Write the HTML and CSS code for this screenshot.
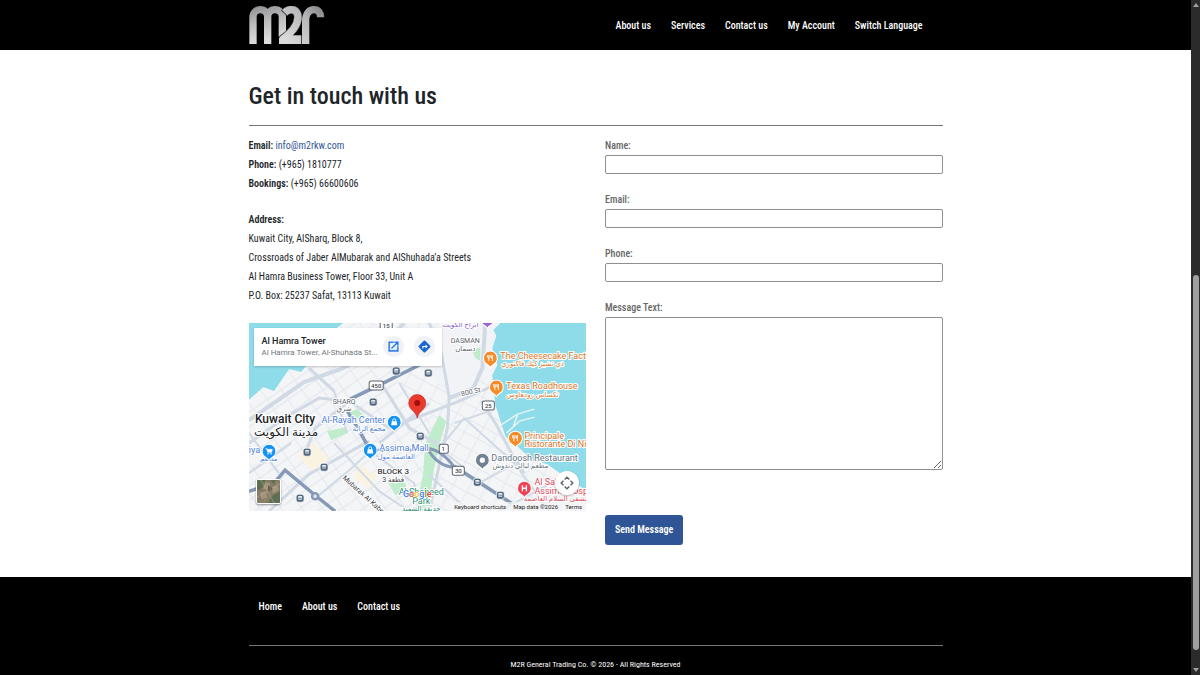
FILE: index.html
```html
<!DOCTYPE html>
<html lang="en">
<head>
<meta charset="utf-8">
<meta name="viewport" content="width=device-width, initial-scale=1">
<title>Contact us - M2R</title>
<link rel="stylesheet" href="styles.css">
</head>
<body>
<header class="site-header">
  <div class="container header-row">
    <a class="logo" href="#" aria-label="M2R home">
      <svg viewBox="0 0 226 114" aria-hidden="true">
        <defs>
          <linearGradient id="steel" gradientUnits="userSpaceOnUse" x1="0" y1="0" x2="30" y2="114">
            <stop offset="0" stop-color="#8d8d8f"/><stop offset=".5" stop-color="#bdbdbf"/><stop offset="1" stop-color="#dededf"/>
          </linearGradient>
          <linearGradient id="steel2" gradientUnits="userSpaceOnUse" x1="225" y1="10" x2="120" y2="114">
            <stop offset="0" stop-color="#858587"/><stop offset=".4" stop-color="#b9b9bb"/><stop offset="1" stop-color="#dadadb"/>
          </linearGradient>
        </defs>
        <g fill="none" stroke-width="22">
          <path stroke="url(#steel)" d="M11 114V33A22 22 0 0 1 55 33V114M55 33A22 22 0 0 1 99 33V92"/>
          <path stroke="#444" stroke-width="25" d="M104 22Q114 11 126 11C138 11 146 20 146 34C146 62 122 84 96 101"/>
          <path stroke="url(#steel2)" d="M169 114V45C169 22 180 11 194 11C207 11 214 20 214 34"/>
          <path stroke="url(#steel2)" d="M106 20Q115 11 126 11C138 11 146 20 146 34C146 62 122 84 98 102"/>
        </g>
        <path fill="url(#steel2)" d="M89 114V95L112 88H156V114Z"/>
      </svg>
    </a>
    <nav class="main-nav" aria-label="Main">
      <a href="#">About us</a>
      <a href="#">Services</a>
      <a href="#">Contact us</a>
      <a href="#">My Account</a>
      <a href="#">Switch Language</a>
    </nav>
  </div>
</header>

<main class="container">
  <h1>Get in touch with us</h1>
  <div class="columns">
    <section class="details">
      <p class="lines"><b>Email:</b> <a href="#">info@m2rkw.com</a><br><b>Phone:</b> (+965) 1810777<br><b>Bookings:</b> (+965) 66600606</p>
      <p class="address"><b>Address:</b><br>Kuwait City, AlSharq, Block 8,<br>Crossroads of Jaber AlMubarak and AlShuhada’a Streets<br>Al Hamra Business Tower, Floor 33, Unit A<br>P.O. Box: 25237 Safat, 13113 Kuwait</p>
      <div class="map">
        <svg class="map-canvas" viewBox="0 0 337 188" role="img" aria-label="Map of Kuwait City">
          <defs>
            <pattern id="streets" width="17" height="12" patternUnits="userSpaceOnUse" patternTransform="rotate(-35)">
              <path d="M0 1H17M5 0V12" fill="none" stroke="#e3e7ed" stroke-width="1"/>
            </pattern>
            <pattern id="streets2" width="13" height="15" patternUnits="userSpaceOnUse" patternTransform="rotate(-62)">
              <path d="M0 1H13M5 0V15" fill="none" stroke="#e3e7ed" stroke-width="1"/>
            </pattern>
            <g id="stop">
              <rect x="-4" y="-4" width="8" height="8" rx="2.5" fill="#50677d" stroke="#fff" stroke-width=".8"/>
              <rect x="-2" y="-2.2" width="4" height="3.6" rx=".6" fill="#e8eef3"/>
              <path d="M-2 0H2M-1.5 2.4H1.5" stroke="#50677d" stroke-width=".8"/>
            </g>
            <path id="pin" d="M0 9.500C-1 7.500-2 7-3.500 6.100A7 7 0 1 1 3.500 6.100C2 7 1 7.500 0 9.500Z" stroke="#fff" stroke-width="1"/>
            <g id="food" stroke="#fff" fill="none" stroke-width=".9">
              <path d="M-1.5-3V3M-2.8-3V-1Q-2.8 0-1.5 0T-.2-1V-3M2 3V-3Q.8-2 .9 0H2"/>
            </g>
            <g id="bag">
              <path d="M-2.5-1H2.5L3 3.2H-3Z" fill="#fff"/>
              <path d="M-1.4-.6V-2A1.4 1.4 0 0 1 1.4-2V-.6" fill="none" stroke="#fff" stroke-width=".9"/>
            </g>
          </defs>
          <rect width="337" height="188" fill="#f4f5f7"/>
          <rect width="337" height="188" fill="url(#streets)"/>
          <path d="M120 0H260V100H190L150 60ZM180 100H337V188H175Z" fill="#f4f5f7"/>
          <path d="M120 0H260V100H190L150 60ZM180 100H337V188H175Z" fill="url(#streets2)"/>
          <path d="M130 22L200 0H250V50L200 72L178 50Z" fill="#f2f3f6"/>
          <g fill="#faf3e2"><path d="M48 132L62 118L80 135L66 150Z"/><path d="M108 22L128 15L140 30L120 36Z"/><path d="M110 142L128 152L120 165L104 155Z"/></g>
          <g fill="#bfeccb">
            <path d="M190 92L197 98L189 125L184 150L179 188H166L174 150L176 120Z"/>
            <path d="M78 108L96 104L98 110L82 117Z"/>
            <path d="M100 89L108 86L117 94L111 97Z"/>
            <path d="M140 160L155 158L158 166L146 172Z"/>
            <path d="M223 28L231 24V38L226 35Z"/>
          </g>
          <g fill="#8edbe9">
            <path d="M0 0H94L66 22L78 43H57L52 49L40 46L25 68L14 64L0 77Z"/>
            <path d="M251 0H337V167L316 154L298 141L283 137L268 123L256 113L250 94L246 82L243 52L248 42L243 25L247 13L244 7Z"/>
          </g>
          <g fill="none" stroke="#e7f5f6" stroke-width="1.5">
            <path d="M250 103L268 91L285 86M257 110L270 98L285 94M268 92L264 103"/>
          </g>
          <g fill="none" stroke="#d0d9e4">
            <path stroke-width="4" d="M0 97L55 59L94 45L130 25L155 0M200 75L224 65L233 45L236 0"/>
            <path stroke-width="3" d="M0 120L40 92L70 75L100 78L140 105L210 78L245 62M20 188L60 151L120 118M60 45L85 68M200 75L192 30L180 0M200 75L198 105L180 188M130 120L180 80M132 60L160 105L196 125M56 130L66 105L98 80M232 78L246 100L262 130L275 150"/>
            <path stroke-width="2" d="M85 120L130 168L160 188M121 128L100 147L66 175M121 128L165 160L170 188M215 95L190 125L215 145M215 95L265 140L300 188M180 152L220 188M0 150L42 120M150 60L180 110M205 100L240 88M230 160L262 142M250 188L320 150M85 68L98 110M0 110L30 150"/>
          </g>
          <g fill="none" stroke="#869ab7">
            <path stroke-width="3.5" d="M101 76L130 62L180 37M97 86L108 104L121 127M0 168L25 160L36 147L66 172L86 188M205 143L228 158L262 180"/>
            <path stroke-width="3" d="M121 127H176M178 125Q193 127 205 144Q188 143 178 125"/>
          </g>
          <circle cx="66" cy="173" r="3" fill="#e9edf3" stroke="#869ab7" stroke-width="2.5"/>
          <use href="#stop" x="147" y="48"/><use href="#stop" x="179" y="50"/><use href="#stop" x="124" y="79"/><use href="#stop" x="171" y="113"/><use href="#stop" x="58" y="129"/><use href="#stop" x="75" y="144"/><use href="#stop" x="51" y="175"/><use href="#stop" x="228" y="159"/><use href="#stop" x="251" y="172"/>
          <g class="shield">
            <rect x="131" y="-2" width="12" height="9" rx="2"/><rect x="120" y="58" width="14" height="9" rx="2"/><rect x="233" y="78" width="12" height="9" rx="2"/><rect x="190" y="121" width="9" height="9" rx="2"/><rect x="203" y="143" width="12" height="9" rx="2"/>
            <text x="137" y="5">15</text><text x="127" y="65">450</text><text x="239" y="85">25</text><text x="194" y="128">1</text><text x="209" y="150">30</text>
          </g>
          <g class="area">
            <text x="95" y="81">SHARQ</text><text x="95" y="88">شرق</text>
            <text x="216" y="20">DASMAN</text><text x="216" y="28">دسمان</text>
            <text class="dark block" x="144" y="151">BLOCK 3</text><text class="dark" x="144" y="159">قطعة 3</text>
            <text transform="translate(222 71) rotate(-12)">800 St</text>
            <text transform="translate(115 175) rotate(42)" class="dark">Mubarak Al Kabeer</text>
          </g>
          <text class="city" x="36" y="100">Kuwait City</text>
          <text class="city city-ar" x="37" y="113">مدينة الكويت</text>
          <g class="poi shop">
            <text class="end" x="136" y="100">Al-Rayah Center</text><text class="small mid" x="120" y="108">مجمع الراية</text>
            <text x="130" y="128">Assima Mall</text><text class="small mid" x="147" y="136">العاصمة مول</text>
            <text class="end" x="11" y="130">iya</text><text class="small end" x="11" y="138">مطعم</text>
          </g>
          <g class="poi food">
            <text x="251" y="36">The Cheesecake Factory</text><text class="small mid" x="283" y="43">ذي تشيز كيك فاكتوري</text>
            <text x="257" y="66">Texas Roadhouse</text><text class="small mid" x="283" y="74">تكساس رودهاوس</text>
            <text x="275" y="116">Principale</text><text x="275" y="124">Ristorante Di Nino</text>
          </g>
          <g class="poi sight"><text class="mid small" x="211" y="4">أبراج الكويت</text></g>
          <g class="poi plain"><text x="242" y="138">Dandoosh Restaurant</text><text class="small mid" x="271" y="145">مطعم ليالي دندوش</text></g>
          <g class="poi health"><text x="285" y="162">Al Salam</text><text x="285" y="171">Assima Hospital</text><text class="small mid" x="311" y="178">مستشفى السلام العاصمة</text></g>
          <g class="poi park"><text class="mid" x="172" y="172">Al Shaheed</text><text class="mid" x="172" y="181">Park</text><text class="mid small" x="172" y="188">حديقة الشهيد</text></g>
          <text class="google" x="168" y="174"><tspan fill="#4285f4">G</tspan><tspan fill="#ea4335">o</tspan><tspan fill="#fbbc05">o</tspan><tspan fill="#4285f4">g</tspan><tspan fill="#34a853">l</tspan><tspan fill="#ea4335">e</tspan></text>
          <g transform="translate(145 99)"><use href="#pin" fill="#1593f5"/><use href="#bag"/></g>
          <g transform="translate(121 127)"><use href="#pin" fill="#1593f5"/><use href="#bag"/></g>
          <g transform="translate(20 128)"><use href="#pin" fill="#1593f5"/><path d="M-3.5-2.5H-2.2L-1.2 1H2.5L3.2-1.8H-2" fill="#fff" stroke="#fff" stroke-width=".8"/><circle cx="-1" cy="2.6" r=".8" fill="#fff"/><circle cx="2" cy="2.6" r=".8" fill="#fff"/></g>
          <g transform="translate(241 35)"><use href="#pin" fill="#f68b28"/><use href="#food"/></g>
          <g transform="translate(247 64)"><use href="#pin" fill="#f68b28"/><use href="#food"/></g>
          <g transform="translate(266 115)"><use href="#pin" fill="#f68b28"/><use href="#food"/></g>
          <g transform="translate(238 -4)"><use href="#pin" fill="#9a67d2"/></g>
          <g transform="translate(233 137)"><use href="#pin" fill="#6f8393"/><circle r="2.6" fill="#fff"/></g>
          <g transform="translate(275 165)"><use href="#pin" fill="#ec4456"/><path d="M-2-3V3M2-3V3M-2 0H2" stroke="#fff" stroke-width="1.3"/></g>
          <path d="M168 95C167 88 159.500 87 159.500 80A8.500 8.500 0 0 1 176.500 80C176.500 87 169 88 168 95Z" fill="#ea3a2e" stroke="#c5221f" stroke-width=".6"/>
          <circle cx="168" cy="80" r="3" fill="#a50e0e"/>
        </svg>
        <div class="place">
          <div class="place-text"><strong>Al Hamra Tower</strong><span>Al Hamra Tower, Al-Shuhada St...</span></div>
          <a class="round" href="#" aria-label="Open in Maps"><svg viewBox="0 0 24 24"><path d="M19 19H5V5h7V3H3v18h18v-9h-2zM14 3v2h3.600l-9.800 9.800 1.400 1.400L19 6.400V10h2V3z" fill="#1a73e8" stroke="#1a73e8" stroke-width=".6"/></svg></a>
          <a class="round" href="#" aria-label="Directions"><svg viewBox="0 0 24 24"><path d="M22.400 10.600L13.400 1.600a2 2 0 0 0-2.800 0l-9 9a2 2 0 0 0 0 2.800l9 9a2 2 0 0 0 2.800 0l9-9a2 2 0 0 0 0-2.800z" fill="#1967d2"/><path d="M8 15.500V11h6V8.500l4 3.500-4 3.500V13h-4v2.500z" fill="#fff"/></svg></a>
        </div>
        <button class="satellite" type="button" aria-label="Show satellite imagery">
          <svg viewBox="0 0 24 24" aria-hidden="true"><rect width="24" height="24" fill="#877d66"/><path d="M0 0H9L6 8L0 11ZM15 17L24 12V24H12ZM14 0H20L18 5Z" fill="#5d6f50"/><path d="M9 2L14 4L11 10L6 9ZM15 8L21 5L23 10L17 14ZM3 13L9 12L11 18L5 20Z" fill="#a5957e"/><path d="M0 18L24 4M4 0L18 24M10 13L14 12M7 22L10 20M19 2L22 4" stroke="#b5a890" stroke-width=".7" fill="none"/><path d="M12 6L16 9L12 12ZM2 9L5 12M18 16L22 20" fill="#6a6450" stroke="#6a6450"/></svg>
        </button>
        <button class="camera" type="button" aria-label="Map camera controls">
          <svg viewBox="0 0 24 24" fill="none" stroke="#5f6368" stroke-width="2.400"><path d="M8 6L12 2L16 6M8 18L12 22L16 18M6 8L2 12L6 16M18 8L22 12L18 16"/></svg>
        </button>
        <div class="credits"><button type="button">Keyboard shortcuts</button><span>Map data ©2026</span><a href="#">Terms</a></div>
      </div>
    </section>

    <form class="contact-form">
      <label for="name">Name:</label>
      <input id="name" type="text">
      <label for="email">Email:</label>
      <input id="email" type="email">
      <label for="phone">Phone:</label>
      <input id="phone" type="tel">
      <label for="message">Message Text:</label>
      <textarea id="message"></textarea>
      <button class="send" type="submit">Send Message</button>
    </form>
  </div>
</main>

<footer class="site-footer">
  <div class="container">
    <nav class="footer-nav" aria-label="Footer">
      <a href="#">Home</a>
      <a href="#">About us</a>
      <a href="#">Contact us</a>
    </nav>
    <p class="copyright">M2R General Trading Co. © 2026 - All Rights Reserved</p>
  </div>
</footer>

<div class="scrollbar" aria-hidden="true"><i class="arrow up"></i><i class="thumb"></i><i class="arrow down"></i></div>
</body>
</html>
```
FILE: styles.css
```css
* { box-sizing: border-box; }
html { background: #000; }
body {
  margin: 0;
  padding-right: 9px;
  min-height: 100vh;
  display: flex;
  flex-direction: column;
  background: #fff;
  color: #212529;
  font: 400 10px/19px "Roboto Condensed", "Liberation Sans Narrow", sans-serif;
}
a { color: #2f5597; text-decoration: none; }
p { margin: 0; }
.container { width: 100%; max-width: 694px; margin: 0 auto; }

.site-header { background: #000; }
.header-row { display: flex; align-items: center; justify-content: space-between; height: 50px; }
.logo { width: 76px; height: 38px; }
.logo svg { display: block; width: 100%; height: 100%; }
.main-nav, .footer-nav { display: flex; gap: 20px; font-weight: 500; }
.main-nav { padding-right: 20px; }
.main-nav a, .footer-nav a { color: #fff; }

h1 {
  margin: 0 0 10px;
  padding: 28px 0 10px;
  border-bottom: 1px solid #777;
  font-size: 24px;
  line-height: 37px;
  font-weight: 500;
}
.columns { display: grid; grid-template-columns: 1fr 1fr; gap: 19px; padding-bottom: 32px; }
.details .lines { margin-bottom: 17px; }
.details .address { margin-bottom: 18px; }
.details b { font-weight: 600; }

.contact-form { display: flex; flex-direction: column; align-items: stretch; padding-top: 1px; }
.contact-form label { height: 18px; line-height: 18px; color: #666; font-weight: 500; }
.contact-form input, .contact-form textarea {
  width: 100%;
  margin: 0 0 17px;
  padding: 2px 4px;
  border: 1px solid #8f8f8f;
  border-radius: 2px;
  background: #fff;
  font: inherit;
}
.contact-form input { height: 19px; }
.contact-form textarea { height: 153px; margin-bottom: 45px; resize: vertical; }
.send {
  align-self: flex-start;
  height: 30px;
  padding: 0 10px;
  border: 0;
  border-radius: 3px;
  background: #2f5597;
  color: #fff;
  font: 600 10px/30px "Roboto Condensed", "Liberation Sans Narrow", sans-serif;
}

.map { position: relative; overflow: hidden; font-family: Roboto, "DejaVu Sans", sans-serif; }
.map-canvas { display: block; width: 100%; height: auto; }
.shield rect { fill: #fff; stroke: #5b6470; stroke-width: 1; }
.shield text { font-size: 6px; font-weight: 500; text-anchor: middle; fill: #444; }
.area text { font-size: 7px; text-anchor: middle; fill: #5c6269; stroke: #fff; stroke-width: 2px; paint-order: stroke; }
.area .dark { fill: #3c4043; }
.area .block { font-size: 8px; font-weight: 500; }
.city { font-size: 12px; font-weight: 500; text-anchor: middle; fill: #202124; stroke: #fff; stroke-width: 2px; paint-order: stroke; }
.city-ar { font-weight: 400; }
.poi text { font-size: 9px; stroke: #fff; stroke-width: 2px; paint-order: stroke; }
.poi .small { font-size: 7px; }
.poi .mid { text-anchor: middle; }
.poi .end { text-anchor: end; }
.poi .small.end { text-anchor: start; }
.shop { fill: #4c7fd9; }
.food { fill: #d9772b; }
.sight { fill: #8a5fc7; }
.plain { fill: #647482; }
.health { fill: #d94a5c; }
.park { fill: #2f8f76; }
.google { font-size: 9px; font-weight: 500; text-anchor: middle; stroke: #fff; stroke-width: 1px; paint-order: stroke; }

.place {
  position: absolute;
  top: 5px;
  left: 5px;
  display: flex;
  align-items: center;
  gap: 10px;
  width: 188px;
  height: 38px;
  padding: 0 7px 2px 8px;
  background: #fff;
  box-shadow: 0 1px 2px rgba(0, 0, 0, .2);
}
.place-text { flex: 1; display: flex; flex-direction: column; min-width: 0; white-space: nowrap; }
.place strong { font-size: 9px; line-height: 12px; font-weight: 500; color: #202124; }
.place span { font-size: 8px; line-height: 11px; color: #70757a; }
.round { flex: none; display: grid; place-items: center; width: 21px; height: 21px; border-radius: 50%; background: #f0f2f6; }
.round svg { width: 13px; height: 13px; }
.satellite { position: absolute; left: 7px; bottom: 7px; width: 25px; height: 25px; padding: 0; border: 1px solid #fff; border-radius: 2px; box-shadow: 0 1px 2px rgba(0, 0, 0, .4); overflow: hidden; }
.satellite svg { display: block; width: 100%; height: 100%; }
.camera { position: absolute; right: 7px; bottom: 16px; display: grid; place-items: center; width: 24px; height: 24px; padding: 0; border: 0; border-radius: 50%; background: #fff; box-shadow: 0 1px 2px rgba(0, 0, 0, .3); }
.camera svg { width: 14px; height: 14px; }
.credits { position: absolute; right: 0; bottom: 0; display: flex; gap: 7px; padding: 0 4px 0 2px; background: rgba(245, 245, 245, .7); font-size: 6px; line-height: 9px; color: #222; }
.credits button { padding: 0; border: 0; background: none; font: inherit; color: inherit; }
.credits a { color: inherit; }

.site-footer { flex: 1; background: #000; color: #fff; }
.footer-nav { padding: 20px 10px 29px; border-bottom: 1px solid #777; }
.copyright { padding-top: 9px; font-size: 8px; text-align: center; }

.scrollbar { position: fixed; top: 0; right: 0; bottom: 0; width: 9px; display: flex; flex-direction: column; align-items: center; justify-content: flex-end; gap: 18px; padding: 3px 0; background: #2b2b2b; }
.thumb { width: 6px; height: 56%; border-radius: 3px; background: #9f9f9f; }
.arrow { border: 3px solid transparent; }
.up { margin-bottom: auto; border-top: 0; border-bottom: 4px solid #9f9f9f; }
.down { border-bottom: 0; border-top: 4px solid #9f9f9f; }
```
